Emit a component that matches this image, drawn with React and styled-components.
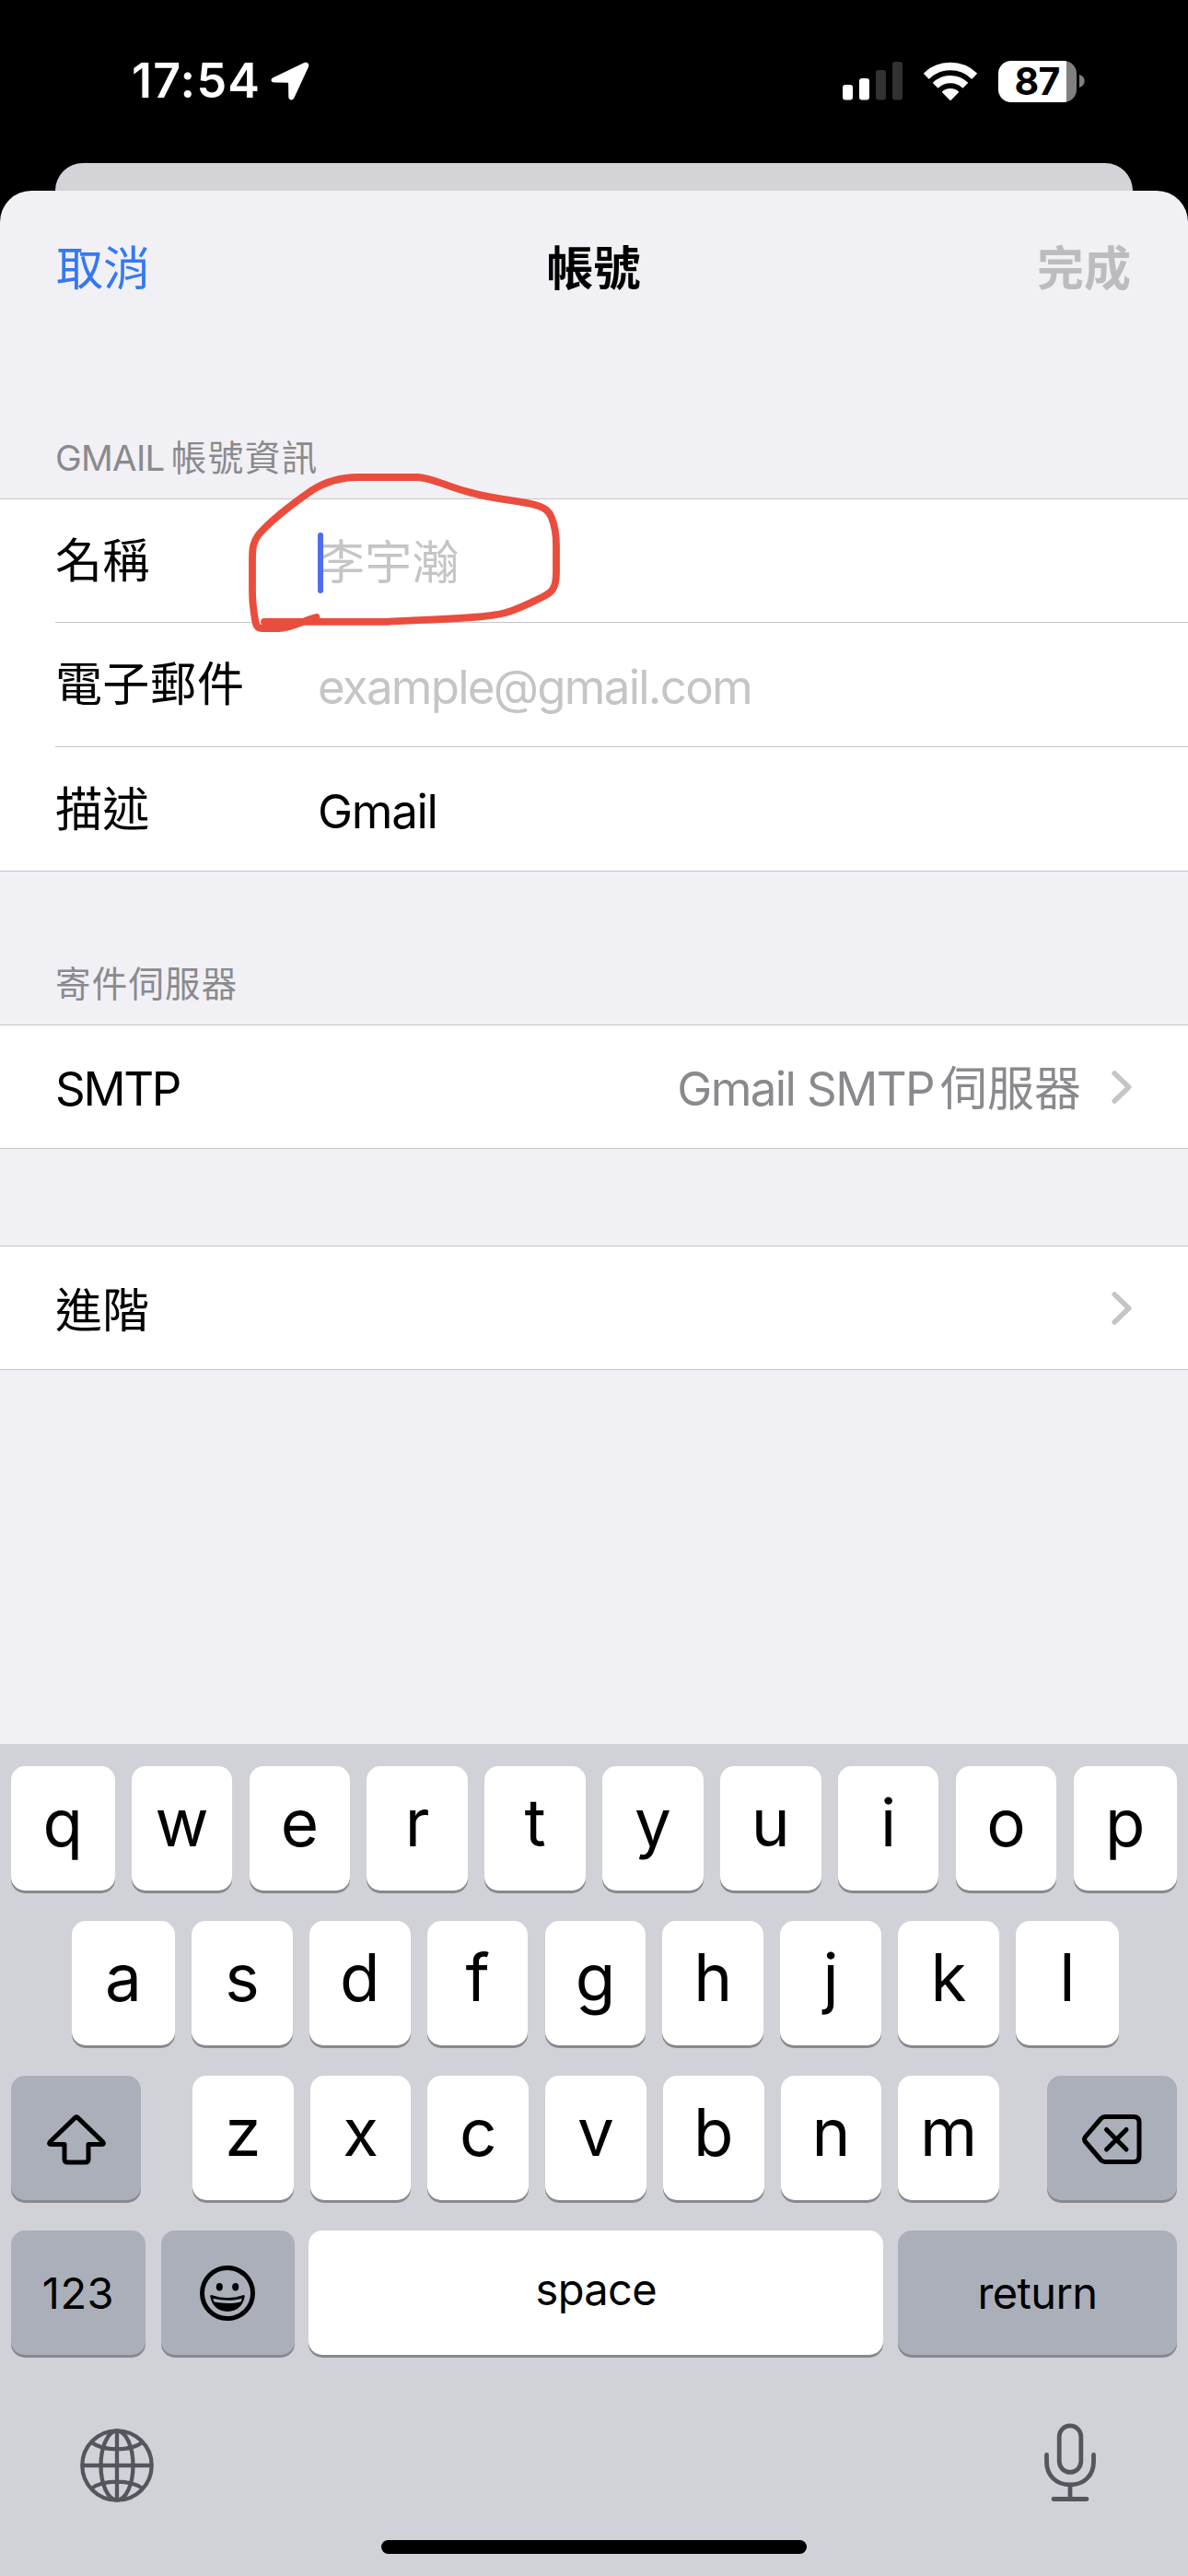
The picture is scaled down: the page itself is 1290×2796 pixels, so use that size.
import React from 'react';
import styled, { createGlobalStyle } from 'styled-components';

const BLUE = '#3478f6';
const CARET = '#4f6dec';
const SHEET = '#f1f0f5';
const HAIRLINE = '#c6c6c8';
const GREY = '#8a8a8e';
const PLACEHOLDER = '#c5c5c7';
const KEYBOARD = '#d1d2d8';
const KEY_DARK = '#abafba';
const KEY_SHADOW = '#88898d';
const TOOL = '#53575d';
const MARKER = '#ea4d3d';

const GlobalStyle = createGlobalStyle`
  * {
    box-sizing: border-box;
  }

  body {
    margin: 0;
    background: #000;
    font-family: Inter, 'Noto Sans CJK TC', sans-serif;
  }

  svg {
    display: block;
    flex: none;
  }
`;

const Screen = styled.div`
  position: relative;
  display: flex;
  flex-direction: column;
  width: 1290px;
  height: 2796px;
  overflow: hidden;
  background: #000;
  color: #000;
  font-size: 51px;
  line-height: 60px;
`;

const StatusBar = styled.header`
  display: flex;
  justify-content: space-between;
  align-items: flex-start;
  height: 177px;
  padding: 58px 112px 0 143px;
  color: #fff;
`;

const StatusGroup = styled.div`
  display: flex;
  align-items: center;
  gap: ${({ $gap = 0 }) => $gap}px;
  height: 60px;
`;

const Time = styled.span`
  width: 151px;
  font-size: 52px;
  font-weight: 600;
  letter-spacing: 1.2px;
`;

const Battery = styled.div`
  display: flex;
  align-items: center;
  gap: 3px;
`;

const BatteryBody = styled.div`
  width: 85px;
  height: 45px;
  padding-right: 1px;
  border-radius: 14px;
  background: linear-gradient(to right, #fff 74px, #808080 74px);
  color: #000;
  font-size: 41px;
  font-weight: 700;
  line-height: 45px;
  letter-spacing: -0.8px;
  text-align: center;
`;

const BackSheet = styled.div`
  height: 30px;
  margin: 0 60px;
  border-radius: 30px 30px 0 0;
  background: #d4d3d8;
`;

const Sheet = styled.main`
  flex: 1;
  border-radius: 34px 34px 0 0;
  background: ${SHEET};
`;

const NavBar = styled.nav`
  display: grid;
  grid-template-columns: 1fr auto 1fr;
  align-items: center;
  height: 168px;
  padding: 2px 62px 0 61px;
`;

const NavButton = styled.button`
  justify-self: ${({ $end }) => ($end ? 'end' : 'start')};
  padding: 0;
  border: 0;
  background: none;
  font: inherit;
  font-weight: ${({ $end }) => ($end ? 600 : 400)};
  color: ${({ $end }) => ($end ? '#bcbcbf' : BLUE)};
`;

const NavTitle = styled.h1`
  margin: 0;
  font-size: 51px;
  font-weight: 600;
`;

const SectionHeader = styled.h2`
  display: flex;
  align-items: flex-end;
  height: 166px;
  margin: 0;
  padding: 0 60px 20px;
  font-size: 38.5px;
  font-weight: 400;
  line-height: 48px;
  letter-spacing: ${({ $spacing = 0 }) => $spacing}px;
  color: ${GREY};
`;

const Han = styled.span`
  margin-left: ${({ $gap }) => $gap}px;
  letter-spacing: ${({ $spacing = 0 }) => $spacing}px;
`;

const Card = styled.section`
  margin-top: ${({ $gap = 0 }) => $gap}px;
  border-top: 1px solid ${HAIRLINE};
  border-bottom: 1px solid ${HAIRLINE};
  background: #fff;
`;

const Row = styled.div`
  display: flex;
  align-items: center;
  height: ${({ $height = 133 }) => $height}px;
  margin-left: 60px;
  padding-right: 61px;
  border-bottom: ${({ $divided }) => ($divided ? `1px solid ${HAIRLINE}` : '0')};
`;

const Label = styled.span`
  width: 285px;
  padding-top: ${({ $drop = 0 }) => $drop}px;
  letter-spacing: ${({ $spacing = 0.3 }) => $spacing}px;
`;

const Value = styled.span`
  display: flex;
  align-items: center;
  padding-top: 5px;
  letter-spacing: ${({ $spacing = 0.3 }) => $spacing}px;
  color: ${({ $placeholder }) => ($placeholder ? PLACEHOLDER : '#000')};
`;

const Caret = styled.i`
  width: 6px;
  height: 66px;
  margin-right: -6px;
  border-radius: 3px;
  background: ${CARET};
  z-index: 1;
`;

const Detail = styled.span`
  margin-left: auto;
  margin-right: 33px;
  padding-top: 5px;
  letter-spacing: -1.6px;
  color: ${GREY};
`;

const Keyboard = styled.footer`
  display: flex;
  flex-direction: column;
  gap: 33px;
  height: 903px;
  padding: 24px 12px 0;
  background: ${KEYBOARD};
`;

const KeyRow = styled.div`
  display: flex;
  justify-content: space-between;
  height: 135px;
  padding: ${({ $inset = 0 }) => $inset};
`;

const Letters = styled.div`
  display: flex;
  justify-content: space-between;
  width: 876px;
  margin-left: 4px;
`;

const Key = styled.button`
  display: flex;
  justify-content: center;
  align-items: center;
  width: ${({ $width = 109.6 }) => $width}px;
  height: 135px;
  margin-left: ${({ $shift = 0 }) => $shift}px;
  padding: ${({ $drop = 0 }) => $drop}px 0 ${({ $lift = 0 }) => $lift}px;
  border: 0;
  border-radius: 15px;
  background: ${({ $dark }) => ($dark ? KEY_DARK : '#fff')};
  box-shadow: 0 3px 0 ${KEY_SHADOW};
  color: #000;
  font-family: inherit;
  font-size: 47px;
  font-weight: 400;
  letter-spacing: ${({ $spacing = -0.6 }) => $spacing}px;
`;

const LetterKey = styled(Key)`
  padding-bottom: 13px;
  font-size: 71px;
  letter-spacing: 0;
`;

const Tools = styled.div`
  display: flex;
  justify-content: space-between;
  align-items: flex-end;
  padding: 41px 88px 0 75px;
`;

const HomeIndicator = styled.div`
  position: absolute;
  left: 414px;
  bottom: 24px;
  width: 462px;
  height: 15px;
  border-radius: 8px;
  background: #000;
`;

const Annotation = styled.svg`
  position: absolute;
  left: 255px;
  top: 500px;
`;

function LocationArrow() {
  return (
    <svg width="42" height="42" viewBox="0 0 42 42" fill="#fff">
      <path d="M2.6 17.2 36.4 1.1C39.6-.4 42.3 2.200 41 5.500L25.400 39.300C23.900 42.600 19.400 41.800 19.300 38.200L19.100 23.700Q19.100 22.800 18.200 22.800L3.700 22.600C0 22.500-.6 18.700 2.600 17.200Z" />
    </svg>
  );
}

function Signal() {
  return (
    <svg width="65" height="42" viewBox="0 0 65 42">
      <rect x="0" y="25" width="11" height="16.500" rx="3" fill="#fff" />
      <rect x="18" y="18" width="11" height="23.500" rx="3" fill="#fff" />
      <rect x="36" y="9" width="11" height="32.500" rx="3" fill="#323232" />
      <rect x="54" y="0" width="11" height="41.500" rx="3" fill="#323232" />
    </svg>
  );
}

function Wifi() {
  return (
    <svg width="58" height="43" viewBox="0 0 58 43" fill="#fff" stroke="#fff" strokeWidth="1.600" strokeLinejoin="round">
      <path d="M.9 12.800A40.800 40.800 0 0 1 57.100 12.800L52.300 17.800A34 34 0 0 0 5.700 17.800Z" />
      <path d="M10.900 22.900A26.600 26.600 0 0 1 47.100 22.900L42.400 27.700A20 20 0 0 0 15.600 27.700Z" />
      <path d="M20.800 32.900A12.600 12.600 0 0 1 37.200 32.900L29 41.200Z" />
    </svg>
  );
}

function BatteryNub() {
  return (
    <svg width="6" height="14" viewBox="0 0 6 14" fill="#808080">
      <path d="M0 0Q5.700 2 5.700 7T0 14Z" />
    </svg>
  );
}

function Chevron() {
  return (
    <svg width="22" height="36" viewBox="0 0 22 36" fill="none" stroke={PLACEHOLDER} strokeWidth="5.500" strokeLinecap="round" strokeLinejoin="round">
      <path d="M3.200 3 18.800 18 3.200 33" />
    </svg>
  );
}

function ShiftIcon() {
  return (
    <svg width="64" height="55" viewBox="0 0 64 55" fill="none" stroke="#000" strokeWidth="5" strokeLinejoin="round">
      <path d="M30.700 3.400Q32 2.200 33.300 3.400L60.600 29.800Q62.600 32.500 59.500 32.500H45V48.500Q45 52 41.500 52H22.500Q19 52 19 48.500V32.500H4.500Q1.400 32.500 3.400 29.800Z" />
    </svg>
  );
}

function DeleteIcon() {
  return (
    <svg width="65" height="54" viewBox="0 0 65 54" fill="none" stroke="#000" strokeWidth="5" strokeLinecap="round" strokeLinejoin="round">
      <path d="M25 2.500H56Q62 2.500 62 8.500V45.500Q62 51.500 56 51.500H25Q22.500 51.500 20.500 49.500L3.800 30Q1.300 27 3.800 24L20.500 4.500Q22.500 2.500 25 2.500Z" />
      <path d="M26.500 16.500 48 38M48 16.500 26.500 38" />
    </svg>
  );
}

function EmojiIcon() {
  return (
    <svg width="60" height="60" viewBox="0 0 60 60">
      <circle cx="30" cy="30" r="27.500" fill="none" stroke="#000" strokeWidth="5" />
      <ellipse cx="21.300" cy="23.300" rx="3.500" ry="4.200" />
      <ellipse cx="38.700" cy="23.300" rx="3.500" ry="4.200" />
      <path d="M12.300 32.500Q30 38.800 47.700 32.500Q48.400 32.300 48.200 33.500C46.500 44 40 49.300 30 49.300S13.500 44 11.800 33.500Q11.600 32.300 12.300 32.500Z" stroke="#000" strokeWidth="1" />
      <path d="M14.300 35.700Q30 40 45.700 35.700Q45.200 38.200 44.300 39.600Q30 42.500 15.700 39.600Q14.800 38.200 14.300 35.700Z" fill={KEY_DARK} />
    </svg>
  );
}

function GlobeIcon() {
  return (
    <svg width="80" height="80" viewBox="0 0 80 80" fill="none" stroke={TOOL} strokeWidth="4.300">
      <circle cx="40" cy="40" r="37.700" />
      <ellipse cx="40" cy="40" rx="17.500" ry="37.500" />
      <path d="M40 2V78M2 40H78M12.500 15Q22 22.300 40 22.300T67.500 15M12.500 65Q22 57.700 40 57.700T67.500 65" />
    </svg>
  );
}

function MicIcon() {
  return (
    <svg width="56" height="86" viewBox="0 0 56 86" fill="none" stroke={TOOL} strokeWidth="4.800" strokeLinecap="round">
      <rect x="16.200" y="2.900" width="23.600" height="50.500" rx="11.800" />
      <path d="M2.500 34.500V42C2.500 57 13 67 28 67S53.500 57 53.500 42V34.500M28 67V82.500M10 82.500H46" />
    </svg>
  );
}

function LetterRow({ letters, edge }) {
  return letters.split('').map((letter, i) => (
    <LetterKey
      key={letter}
      $width={edge && (i === 0 || i === letters.length - 1) ? edge : undefined}
    >
      {letter}
    </LetterKey>
  ));
}

export default function App() {
  return (
    <Screen>
      <GlobalStyle />

      <StatusBar>
        <StatusGroup>
          <Time>17:54</Time>
          <LocationArrow />
        </StatusGroup>
        <StatusGroup $gap={23}>
          <Signal />
          <Wifi />
          <Battery>
            <BatteryBody>87</BatteryBody>
            <BatteryNub />
          </Battery>
        </StatusGroup>
      </StatusBar>

      <BackSheet />

      <Sheet>
        <NavBar>
          <NavButton>取消</NavButton>
          <NavTitle>帳號</NavTitle>
          <NavButton $end>完成</NavButton>
        </NavBar>

        <SectionHeader $spacing={-0.7}>
          GMAIL<Han $gap={7} $spacing={1.5}>帳號資訊</Han>
        </SectionHeader>
        <Card>
          <Row $height={134} $divided>
            <Label>名稱</Label>
            <Value $placeholder>
              <Caret />
              李宇瀚
            </Value>
          </Row>
          <Row $height={135} $divided>
            <Label>電子郵件</Label>
            <Value $placeholder $spacing={-1.75}>example@gmail.com</Value>
          </Row>
          <Row $height={134}>
            <Label $drop={2}>描述</Label>
            <Value $spacing={-1.3}>Gmail</Value>
          </Row>
        </Card>

        <SectionHeader $spacing={1.2}>寄件伺服器</SectionHeader>
        <Card>
          <Row>
            <Label $drop={4} $spacing={-2.3}>SMTP</Label>
            <Detail>
              Gmail SMTP<Han $gap={7}>伺服器</Han>
            </Detail>
            <Chevron />
          </Row>
        </Card>

        <Card $gap={105}>
          <Row>
            <Label $drop={6}>進階</Label>
            <Detail />
            <Chevron />
          </Row>
        </Card>
      </Sheet>

      <Keyboard>
        <KeyRow>
          <LetterRow letters="qwertyuiop" edge={112.5} />
        </KeyRow>
        <KeyRow $inset="0 63px 0 66px">
          <LetterRow letters="asdfghjkl" edge={112} />
        </KeyRow>
        <KeyRow>
          <Key $width={141} $drop={3} $dark>
            <ShiftIcon />
          </Key>
          <Letters>
            <LetterRow letters="zxcvbnm" />
          </Letters>
          <Key $width={141} $drop={3} $dark>
            <DeleteIcon />
          </Key>
        </KeyRow>
        <KeyRow>
          <Key $width={146} $spacing={0.5} $dark>123</Key>
          <Key $width={145} $shift={1} $dark>
            <EmojiIcon />
          </Key>
          <Key $width={624} $lift={9}>space</Key>
          <Key $width={303} $dark>return</Key>
        </KeyRow>
        <Tools>
          <GlobeIcon />
          <MicIcon />
        </Tools>
      </Keyboard>

      <Annotation width="370" height="200" viewBox="0 0 370 200" fill="none" stroke={MARKER} strokeWidth="7.800" strokeLinecap="round" strokeLinejoin="round">
        <path d="M88.500 170C73 174 61 182 48 182H29C25 182 23.500 179.500 22.500 175.500C20 162 19 152 19 142V107C19 94 20 88 26 80C40 64 58 50 84 32C100 22 116 18 134 18H198C212 18 228 27 250 33C288 44 306 42 326 48C336 51 341 54 344 62C348 72 349 80 349 92V122C349 140 343 144 332 149C300 165 290 168 258 170C220 173 190 173 165 174.800H32" />
      </Annotation>
      <HomeIndicator />
    </Screen>
  );
}
